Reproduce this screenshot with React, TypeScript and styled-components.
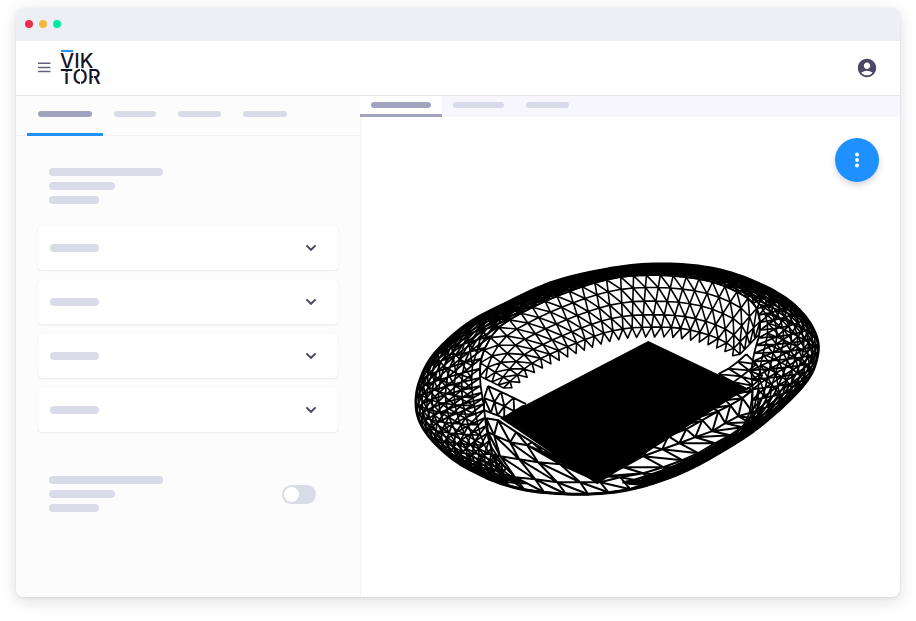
import React, { useState } from "react";
import styled, { createGlobalStyle } from "styled-components";
import { MdAccountCircle } from "react-icons/md";

const GlobalStyle = createGlobalStyle`
  * { box-sizing: border-box; }
  body {
    margin: 0;
    background: #ffffff;
    font-family: Inter, "Open Sans", sans-serif;
  }
  button { border: 0; padding: 0; margin: 0; background: none; font: inherit; cursor: pointer; }
`;

const Page = styled.div`
  min-height: 100vh;
  padding: 8px 16px 24px;
  display: flex;
`;

const Window = styled.div`
  flex: 1;
  display: flex;
  flex-direction: column;
  background: #ffffff;
  border-radius: 8px;
  overflow: hidden;
  box-shadow: 0 4px 16px rgba(20, 22, 40, 0.14), 0 1px 3px rgba(20, 22, 40, 0.08);
`;

const TitleBar = styled.div`
  display: flex;
  align-items: center;
  gap: 6px;
  height: 33px;
  padding: 0 9px 1px;
  background: #eeeff5;
`;

const Dot = styled.span<{ $color: string }>`
  width: 8px;
  height: 8px;
  border-radius: 50%;
  background: ${(p) => p.$color};
`;

const Header = styled.header`
  display: flex;
  align-items: center;
  gap: 9px;
  height: 55px;
  padding: 0 22px;
  border-bottom: 1px solid #e7e7eb;
`;

const IconButton = styled.button`
  display: flex;
  color: #4b4963;
`;

const AccountButton = styled(IconButton)`
  margin-left: auto;
`;

const LogoLink = styled.a`
  display: flex;
`;

const Body = styled.div`
  flex: 1;
  display: flex;
`;

const Sidebar = styled.aside`
  flex: 0 0 38.9%;
  background: #fcfcfc;
  box-shadow: 1px 0 0 #f4f4f6;
`;

const SideTabs = styled.div`
  display: flex;
  height: 40px;
  padding-left: 11px;
  border-bottom: 1px solid #f0f1f7;
`;

const SideTab = styled.button<{ $active: boolean }>`
  display: flex;
  align-items: center;
  height: 40px;
  padding: 0 11px 1px;
  border-bottom: 3px solid ${(p) => (p.$active ? "#1e90ff" : "transparent")};
`;

const Bar = styled.span<{ $w: number; $h?: number; $strong?: boolean }>`
  display: block;
  width: ${(p) => p.$w}px;
  height: ${(p) => p.$h ?? 8}px;
  border-radius: 4px;
  background: ${(p) => (p.$strong ? "#a2a4bf" : "#d9dbe8")};
`;

const SideContent = styled.div`
  padding: 32px 22px;
`;

const TextLines = styled.div`
  display: flex;
  flex-direction: column;
  gap: 6px;
  padding-left: 11px;
`;

const Cards = styled.div`
  display: flex;
  flex-direction: column;
  gap: 10px;
  margin: 22px 0 44px;
`;

const Card = styled.button`
  display: flex;
  align-items: center;
  justify-content: space-between;
  height: 44px;
  padding: 0 19px 0 12px;
  background: #ffffff;
  border-radius: 4px;
  box-shadow: 0 1px 2px rgba(20, 22, 40, 0.07), 0 0 1px rgba(20, 22, 40, 0.08);
`;

const ToggleRow = styled.label`
  display: flex;
  align-items: center;
  justify-content: space-between;
  padding-right: 22px;
`;

const Toggle = styled.input`
  appearance: none;
  display: flex;
  align-items: center;
  width: 34px;
  height: 19px;
  margin: 0;
  padding: 2px;
  border-radius: 10px;
  background: #d9dbe8;
  cursor: pointer;
  &::before {
    content: "";
    width: 15px;
    height: 15px;
    border-radius: 50%;
    background: #ffffff;
  }
  &:checked { justify-content: flex-end; background: #1e90ff; }
`;

const Main = styled.main`
  flex: 1;
  min-width: 0;
`;

const ViewTabs = styled.div`
  display: flex;
  height: 21px;
  background: #f6f6fc;
`;

const ViewTab = styled.button<{ $active: boolean }>`
  display: flex;
  align-items: center;
  padding: 0 11px;
  background: ${(p) => (p.$active ? "#ffffff" : "transparent")};
  border-bottom: 3px solid ${(p) => (p.$active ? "#a2a4bf" : "transparent")};
`;

const Viewer = styled.section`
  display: flex;
  flex-direction: column;
  padding: 21px;
`;

const ActionButton = styled.button`
  display: flex;
  align-items: center;
  justify-content: center;
  align-self: flex-end;
  width: 44px;
  height: 44px;
  border-radius: 50%;
  background: #1e90ff;
  box-shadow: 0 3px 6px rgba(20, 22, 40, 0.18);
`;

const Drawing = styled.svg`
  width: 82%;
  height: auto;
  margin: 80px 0 0 32px;
`;

type Pt = [number, number];

/* Catmull-Rom point at parameter t (0..1) along a list of control points. */
function along(pts: Pt[], t: number, closed: boolean): Pt {
  const n = pts.length;
  const segs = closed ? n : n - 1;
  const u = Math.min(t, 1) * segs;
  const i = Math.min(Math.floor(u), segs - 1);
  const f = u - i;
  const at = (k: number) =>
    closed ? pts[(k + n) % n] : pts[Math.max(0, Math.min(n - 1, k))];
  const [a, b, c, d] = [at(i - 1), at(i), at(i + 1), at(i + 2)];
  const axis = (k: 0 | 1) =>
    0.5 *
    (2 * b[k] +
      (c[k] - a[k]) * f +
      (2 * a[k] - 5 * b[k] + 4 * c[k] - d[k]) * f * f +
      (3 * b[k] - a[k] - 3 * c[k] + d[k]) * f * f * f);
  return [axis(0), axis(1)];
}

function sample(pts: Pt[], n: number): Pt[] {
  return Array.from({ length: n + 1 }, (_, i) => along(pts, i / n, false));
}

/* Points of a closed curve between two parameters; the range may pass 1. */
function arc(pts: Pt[], from: number, to: number, n: number): Pt[] {
  return Array.from({ length: n + 1 }, (_, i) => along(pts, (from + ((to - from) * i) / n) % 1, true));
}

/* Points spread evenly by length along an open curve. */
function even(pts: Pt[], n: number): Pt[] {
  const fine = sample(pts, 400);
  const len = [0];
  for (let i = 1; i < fine.length; i++)
    len.push(len[i - 1] + Math.hypot(fine[i][0] - fine[i - 1][0], fine[i][1] - fine[i - 1][1]));
  const out: Pt[] = [];
  let k = 0;
  for (let i = 0; i <= n; i++) {
    const goal = (len[400] * i) / n;
    while (k < 400 && len[k] < goal) k++;
    out.push(fine[k]);
  }
  return out;
}

const mix = (a: Pt, b: Pt, f: number): Pt => [a[0] + (b[0] - a[0]) * f, a[1] + (b[1] - a[1]) * f];
const str = (p: Pt) => `${p[0].toFixed(1)} ${p[1].toFixed(1)}`;
const line = (pts: Pt[]) => "M" + pts.map(str).join("L");

/* Triangulated lattice between successive rings of equal length. */
function lattice(rings: Pt[][], flip = false): string {
  let d = rings.map(line).join("");
  for (let r = 0; r + 1 < rings.length; r++) {
    const a = rings[r];
    const b = rings[r + 1];
    for (let i = 0; i < a.length; i++) {
      d += line([a[i], b[i]]);
      if (i + 1 < a.length) d += flip ? line([a[i + 1], b[i]]) : line([a[i], b[i + 1]]);
    }
  }
  return d;
}

const outer: Pt[] = [
  [653, 264], [687, 265], [720, 270], [753, 281], [785, 298], [806, 318], [817, 340], [816, 360],
  [807, 380], [785, 404], [753, 431], [720, 452], [687, 470], [653, 483], [620, 491], [580, 494],
  [533, 491], [500, 483], [473, 471], [453, 459], [433, 441], [420, 422], [416, 402], [420, 380],
  [434, 354], [467, 324], [510, 301], [550, 283], [587, 273], [620, 267],
];

const inner: Pt[] = [
  [653, 275], [685, 277], [712, 282], [735, 291], [752, 302], [759, 316], [759, 334], [754, 352],
  [751, 372], [752, 395], [744, 424], [715, 445], [682, 462], [648, 475], [618, 483], [580, 487],
  [535, 484], [512, 475], [500, 460], [490, 444], [486, 426], [484, 408], [482, 395], [480, 378],
  [482, 355], [497, 329], [525, 311], [555, 297], [587, 285], [620, 277],
];

/* Rings of the curved shell; the low front edge is left open. */
const ringAt = (f: number, n: number, shift: number) => {
  const from = 16.6 / 30 + shift / 120;
  const to = 43 / 30 + shift / 120;
  const a = arc(outer, from, to, n);
  const b = arc(inner, from, to, n);
  return a.map((p, i) => mix(p, b[i], f));
};

const shell =
  lattice([0, 0.09, 0.24, 0.45, 0.7, 1].map((f, i) => ringAt(f, 62, i * 0.7)));
const shellBack =
  lattice([0.04, 0.16, 0.34, 0.58, 0.86].map((f, i) => ringAt(f, 47, 3 - i * 1.1)), true);

const WALL = 27;
const wallTop = even(
  [[480, 376], [482, 355], [497, 329], [525, 311], [555, 297], [587, 285], [620, 277], [653, 275],
   [685, 277], [712, 282], [735, 291], [752, 302], [759, 316], [759, 334]], WALL);
const wallFoot = even(
  [[508, 390], [517, 384], [538, 370], [555, 362], [582, 351], [607, 342], [628, 338], [648, 337],
   [670, 337], [690, 340], [709, 345], [726, 352], [736, 358]], WALL);
const wallRings = [0, 0.2, 0.42, 0.64, 0.84].map((f) => wallTop.map((p, i) => mix(p, wallFoot[i], f)));
const zigzag = line(
  wallRings[4].flatMap((p, i) => (i < WALL ? [p, mix(wallFoot[i], wallFoot[i + 1], 0.5)] : [p]))
);
const wall = lattice(wallRings) + zigzag;

/* Low front stand, from the field edge out to the rim. */
const front = lattice([
  [[486, 418], [498, 420], [516, 432], [532, 442], [548, 452], [565, 460], [600, 470], [630, 452],
   [650, 444], [668, 434], [682, 425], [696, 418], [712, 408], [725, 400], [736, 394], [748, 388]],
  [[488, 432], [494, 435], [510, 442], [527, 445], [543, 452], [560, 460], [600, 472], [630, 456],
   [650, 446], [668, 436], [686, 429], [702, 420], [718, 411], [730, 405], [742, 398], [752, 390]],
  [[492, 454], [500, 456], [519, 459], [538, 462], [560, 464], [582, 474], [603, 476], [623, 467],
   [643, 456], [662, 449], [679, 443], [695, 437], [712, 431], [725, 423], [738, 416], [752, 412]],
  [[502, 474], [515, 477], [535, 479], [557, 482], [580, 482], [600, 482], [620, 477], [643, 473],
   [663, 467], [682, 460], [698, 453], [715, 443], [730, 435], [742, 427], [748, 422], [754, 418]],
  [[508, 485], [524, 489], [544, 492], [566, 494], [588, 494], [608, 492], [630, 489], [652, 483],
   [672, 476], [690, 468], [706, 460], [722, 451], [735, 443], [745, 436], [752, 431], [758, 427]],
]);

const corners =
  lattice([
    even([[718, 374], [732, 366], [746, 354]], 3),
    even([[733, 382], [744, 374], [756, 364]], 3),
    even([[746, 389], [754, 384], [762, 376]], 3),
  ]) +
  lattice([
    even([[488, 386], [506, 394], [526, 404]], 3),
    even([[484, 398], [500, 404], [514, 411]], 3),
    even([[484, 410], [494, 414], [504, 418]], 3),
  ]);

const outline = line(arc(outer, 0, 1, 180)) + "Z";

function Stadium() {
  return (
    <Drawing viewBox="413 262 408 235" role="img" aria-label="Stadium structure">
      <g fill="none" stroke="#000" strokeLinejoin="round">
        <path d={shell} strokeWidth="1.8" />
        <path d={shellBack} strokeWidth="1.6" />
        <path d={wall} strokeWidth="1.6" />
        <path d={front} strokeWidth="2" />
        <path d={corners} strokeWidth="1.8" />
        <path d={outline} strokeWidth="3" />
      </g>
      <path d="M648 341L747 388L597 484L500 418Z" fill="#000" />
    </Drawing>
  );
}

function Logo() {
  return (
    <svg width="46" height="46" viewBox="0 -5 46 46" role="img" aria-label="Viktor">
      <g fill="#15142b" fontFamily="Inter, sans-serif" fontSize="20" fontWeight="500">
        <text x="0" y="18">VIK</text>
        <text x="0" y="34">TOR</text>
      </g>
      <path d="M1 1H13" stroke="#1e90ff" strokeWidth="2" />
      <path d="M1 22.3H12M20.5 18.5V23M20.5 31V36M33.4 22V36" stroke="#fff" strokeWidth="1" />
    </svg>
  );
}

function Chevron() {
  return (
    <svg width="16" height="16" viewBox="0 0 16 16" aria-hidden="true">
      <path d="M3.4 5.4L8 9.8L12.6 5.4" fill="none" stroke="#4b4963" strokeWidth="2" />
    </svg>
  );
}

const sideTabs = [54, 42, 43, 44];
const viewTabs = [60, 51, 43];
const sections = ["Section 1", "Section 2", "Section 3", "Section 4"];

function Lines() {
  return (
    <TextLines>
      <Bar $w={114} />
      <Bar $w={66} />
      <Bar $w={50} />
    </TextLines>
  );
}

export default function App() {
  const [step, setStep] = useState(0);
  const [view, setView] = useState(0);
  return (
    <>
      <GlobalStyle />
      <Page>
        <Window>
          <TitleBar>
            <Dot $color="#ee2e50" />
            <Dot $color="#f6b73e" />
            <Dot $color="#00e9a8" />
          </TitleBar>
          <Header>
            <IconButton aria-label="Menu">
              <svg width="13" height="12" viewBox="0 0 13 12" aria-hidden="true">
                <path d="M0 1.2H12.5M0 5.4H12.5M0 9.6H12.5" stroke="#656379" strokeWidth="1.5" />
              </svg>
            </IconButton>
            <LogoLink href="#" aria-label="Viktor home">
              <Logo />
            </LogoLink>
            <AccountButton aria-label="Account">
              <MdAccountCircle size={22} />
            </AccountButton>
          </Header>
          <Body>
            <Sidebar>
              <SideTabs role="tablist">
                {sideTabs.map((w, i) => (
                  <SideTab key={i} role="tab" aria-label={`Step ${i + 1}`} aria-selected={step === i}
                    $active={step === i} onClick={() => setStep(i)}>
                    <Bar $w={w} $h={6} $strong={step === i} />
                  </SideTab>
                ))}
              </SideTabs>
              <SideContent>
                <Lines />
                <Cards>
                  {sections.map((name) => (
                    <Card key={name} aria-label={name} aria-expanded={false}>
                      <Bar $w={49} />
                      <Chevron />
                    </Card>
                  ))}
                </Cards>
                <ToggleRow>
                  <Lines />
                  <Toggle type="checkbox" aria-label="Option" />
                </ToggleRow>
              </SideContent>
            </Sidebar>
            <Main>
              <ViewTabs role="tablist">
                {viewTabs.map((w, i) => (
                  <ViewTab key={i} role="tab" aria-label={`View ${i + 1}`} aria-selected={view === i}
                    $active={view === i} onClick={() => setView(i)}>
                    <Bar $w={w} $h={6} $strong={view === i} />
                  </ViewTab>
                ))}
              </ViewTabs>
              <Viewer>
                <ActionButton aria-label="More actions">
                  <svg width="6" height="16" viewBox="0 0 6 16" fill="#fff" aria-hidden="true">
                    <circle cx="3" cy="2.5" r="1.9" />
                    <circle cx="3" cy="8" r="1.9" />
                    <circle cx="3" cy="13.5" r="1.9" />
                  </svg>
                </ActionButton>
                <Stadium />
              </Viewer>
            </Main>
          </Body>
        </Window>
      </Page>
    </>
  );
}
